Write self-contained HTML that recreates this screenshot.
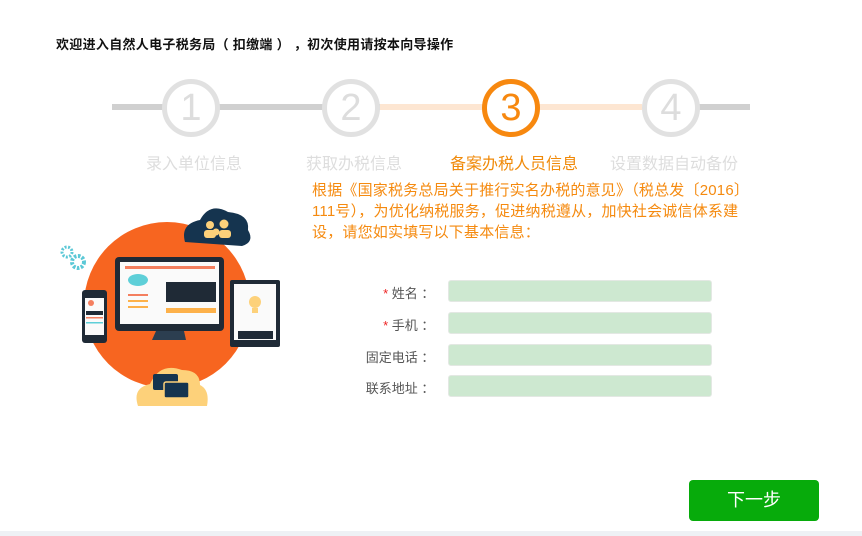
<!DOCTYPE html>
<html><head><meta charset="utf-8"><style>
body{margin:0;width:862px;height:536px;background:#fff;position:relative;overflow:hidden;font-family:"Liberation Sans","Noto Sans CJK SC",sans-serif}
.a{position:absolute}
.title{left:56px;top:34px;font-size:13px;font-weight:bold;color:#111;letter-spacing:0.3px}
.ln{height:6px;top:104px}
.c{width:48px;height:48px;border:5px solid #e1e1e1;border-radius:50%;top:79px;text-align:center;line-height:48px;font-size:38px;color:#ddd;font-family:"Liberation Sans",sans-serif;font-weight:300;background:#fff}
.c.on{border-color:#f7880f;color:#f7880f}
.lb{top:150px;width:160px;text-align:center;font-size:16px;color:#ddd}
.lb.on{color:#f08a0a}
.p{left:312px;top:180px;width:450px;font-size:15px;line-height:21px;color:#f58a0f;letter-spacing:0.2px}
.fl{width:90px;left:348px;text-align:right;font-size:13px;color:#555}
.fl i{color:#e22;font-style:normal}
.in{left:448px;width:262px;height:20px;background:#cde8d0;border:1px solid #e3e8e3;border-radius:3px}
.btn{left:689px;top:480px;width:130px;height:41px;background:#07ab0b;border-radius:4px;color:#fff;font-size:18px;text-align:center;line-height:41px}
</style></head><body>
<div class="a title">欢迎进入自然人电子税务局（&nbsp;扣缴端&nbsp;）&nbsp;，初次使用请按本向导操作</div>
<div class="a ln" style="left:112px;width:270px;background:#d0d0d0"></div>
<div class="a ln" style="left:380px;width:262px;background:#fde6d2"></div>
<div class="a ln" style="left:690px;width:60px;background:#d0d0d0"></div>
<div class="a c" style="left:162px">1</div>
<div class="a c" style="left:322px">2</div>
<div class="a c on" style="left:482px">3</div>
<div class="a c" style="left:642px">4</div>
<div class="a lb" style="left:114px">录入单位信息</div>
<div class="a lb" style="left:274px">获取办税信息</div>
<div class="a lb on" style="left:434px">备案办税人员信息</div>
<div class="a lb" style="left:594px">设置数据自动备份</div>
<div class="a p">根据《国家税务总局关于推行实名办税的意见》（税总发〔2016〕111号），为优化纳税服务，促进纳税遵从，加快社会诚信体系建设，请您如实填写以下基本信息：</div>
<div class="a fl" style="top:283px"><i>* </i>姓名&nbsp;：&nbsp;</div>
<div class="a fl" style="top:315px"><i>* </i>手机&nbsp;：&nbsp;</div>
<div class="a fl" style="top:347px">固定电话&nbsp;：&nbsp;</div>
<div class="a fl" style="top:378px">联系地址&nbsp;：&nbsp;</div>
<div class="a in" style="top:280px"></div>
<div class="a in" style="top:312px"></div>
<div class="a in" style="top:344px"></div>
<div class="a in" style="top:375px"></div>
<svg class="a" style="left:50px;top:190px" width="250" height="220">
<circle cx="117" cy="115" r="83" fill="#f76520"/>
<circle cx="27" cy="68" r="18" fill="#fff"/>
<circle cx="17" cy="62" r="5" fill="none" stroke="#5bc8d6" stroke-width="3" stroke-dasharray="2 1.5"/>
<circle cx="28" cy="72" r="6" fill="none" stroke="#5bc8d6" stroke-width="4" stroke-dasharray="2.5 1.5"/>
<path d="M135 52 Q130 34 150 30 Q160 12 178 22 Q200 24 198 40 Q205 52 192 56 Z" fill="#15344f"/>
<circle cx="160" cy="35" r="4" fill="#fdd17a"/><circle cx="174" cy="34" r="4.5" fill="#fdd17a"/><circle cx="166" cy="42" r="3.5" fill="#fdd17a"/>
<rect x="154" y="40" width="12" height="8" rx="3" fill="#fdd17a"/><rect x="169" y="40" width="12" height="8" rx="3" fill="#fdd17a"/>
<rect x="65" y="67" width="109" height="74" rx="4" fill="#1f2a36"/>
<rect x="70" y="72" width="99" height="62" fill="#fafafa"/>
<rect x="75" y="76" width="90" height="3" fill="#f47f5f"/>
<ellipse cx="88" cy="90" rx="10" ry="6" fill="#5ecfd8"/>
<rect x="116" y="92" width="50" height="20" fill="#1f2a36"/>
<rect x="78" y="104" width="20" height="2" fill="#f47f5f"/><rect x="78" y="110" width="20" height="2" fill="#fdb14a"/><rect x="78" y="116" width="20" height="2" fill="#fdb14a"/>
<rect x="116" y="118" width="50" height="5" fill="#fdb14a"/>
<path d="M106 141 L134 141 L136 150 L102 150 Z" fill="#2c3e50"/>
<rect x="32" y="100" width="25" height="53" rx="3" fill="#1f2a36"/>
<rect x="35" y="108" width="19" height="37" fill="#fafafa"/>
<circle cx="41" cy="113" r="3" fill="#f47f5f"/>
<rect x="36" y="121" width="17" height="4" fill="#1f2a36"/>
<rect x="36" y="127" width="17" height="1.5" fill="#f47f5f"/><rect x="36" y="132" width="17" height="1.5" fill="#5ecfd8"/>
<rect x="180" y="90" width="50" height="67" rx="2" fill="#1f2a36"/>
<rect x="184" y="94" width="42" height="56" fill="#fafafa"/>
<circle cx="205" cy="112" r="6" fill="#fdd17a"/><rect x="202" y="118" width="6" height="5" fill="#fdd17a"/>
<rect x="188" y="141" width="35" height="8" fill="#1f2a36"/>
<path d="M88 216 Q82 198 100 194 Q110 172 132 180 Q150 180 150 195 Q160 200 157 216 Z" fill="#fdd17a"/>
<rect x="103" y="184" width="25" height="16" rx="2" fill="#15344f"/>
<rect x="114" y="192" width="25" height="16" rx="2" fill="#15344f" stroke="#fdd17a" stroke-width="1.5"/>
</svg>
<div class="a btn">下一步</div>
<div class="a" style="left:0;top:531px;width:862px;height:5px;background:#eef1f5"></div>
</body></html>
